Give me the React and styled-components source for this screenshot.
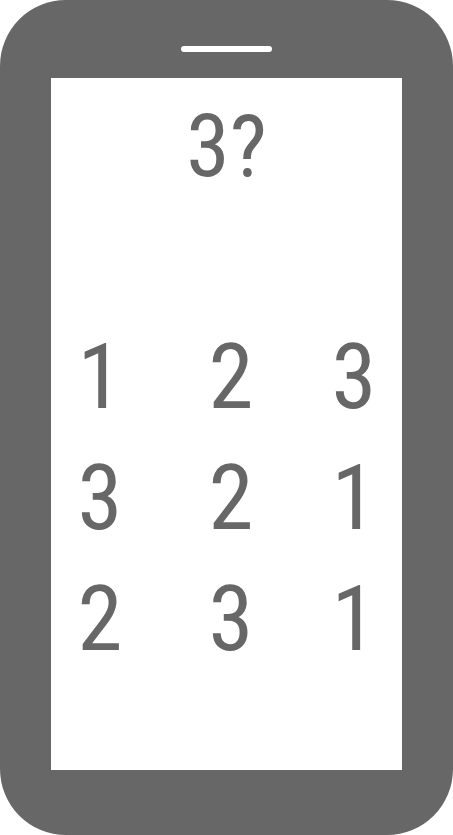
import React from 'react';
import styled, { createGlobalStyle } from 'styled-components';

const GlobalStyle = createGlobalStyle`
    html, body {
        margin: 0;
        padding: 0;
        background: #ffffff;
    }
`;

const Phone = styled.div`
    width: 453px;
    height: 835px;
    box-sizing: border-box;
    background-color: #676767;
    border-radius: 66px;
    display: flex;
    flex-direction: column;
    padding: 0 51px 65px 51px;
`;

const TopBar = styled.div`
    height: 78px;
    display: flex;
    justify-content: center;
    padding-top: 46px;
    box-sizing: border-box;
`;

const Speaker = styled.div`
    width: 91px;
    height: 6px;
    border-radius: 3px;
    background-color: #ffffff;
`;

const Screen = styled.div`
    flex: 1;
    background-color: #ffffff;
    display: flex;
    flex-direction: column;
    align-items: center;
    font-family: Roboto, "Noto Sans", sans-serif;
    font-stretch: 85%;
    color: #676767;
`;

const Question = styled.div`
    font-size: 88px;
    line-height: 1;
    margin-top: 24px;
`;

const Grid = styled.div`
    display: grid;
    grid-template-columns: 126px 136px 110px;
    grid-auto-rows: 121px;
    margin-top: 127px;
    margin-left: -7px;
`;

const Cell = styled.div`
    font-size: 91px;
    line-height: 121px;
    text-align: center;
`;

const numbers = [1, 2, 3, 3, 2, 1, 2, 3, 1];

const App = () => {
    return (
        <>
            <GlobalStyle />
            <Phone>
                <TopBar>
                    <Speaker />
                </TopBar>
                <Screen>
                    <Question>3?</Question>
                    <Grid>
                        {numbers.map((n, i) => (
                            <Cell key={i}>{n}</Cell>
                        ))}
                    </Grid>
                </Screen>
            </Phone>
        </>
    );
};

export default App;
